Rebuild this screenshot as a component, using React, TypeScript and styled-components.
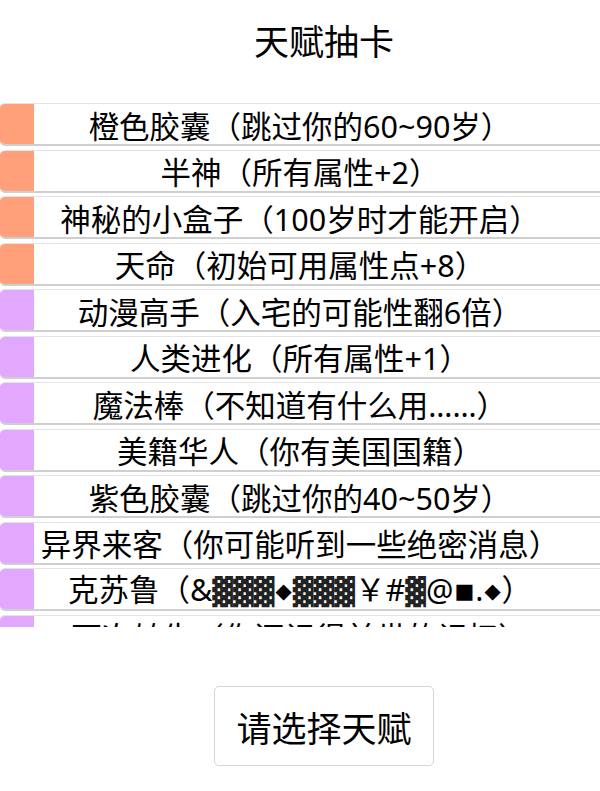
import React from "react";
import styled, { createGlobalStyle } from "styled-components";

const Global = createGlobalStyle`
  html, body { margin: 0; padding: 0; background: #fff; }
  body { font-family: "Noto Sans", "DejaVu Sans", "Noto Sans CJK SC", sans-serif; color: #000; }
  * { box-sizing: border-box; }
`;

const Page = styled.div`
  width: 600px;
  height: 791px;
  display: flex;
  flex-direction: column;
  align-items: stretch;
  overflow: hidden;
`;

const Title = styled.h1`
  margin: 22px 0 0 0;
  padding-left: 48px;
  height: 81px;
  font-size: 35px;
  line-height: 35px;
  font-weight: 400;
  text-align: center;
  font-family: "Noto Sans CJK SC", sans-serif;
`;

const List = styled.ul`
  list-style: none;
  margin: 0;
  padding: 0;
  height: 524px;
  overflow-y: auto;
  scrollbar-width: none;
  &::-webkit-scrollbar { display: none; }
`;

const Row = styled.li`
  display: grid;
  grid-template-columns: 34px 1fr 34px;
  align-items: center;
  height: 43px;
  margin-bottom: 3.5px;
  border-top: 1px solid #e4e4e4;
  border-bottom: 2px solid #cfcfcf;
  border-radius: 5px 0 0 5px;
  background: #fff;
  overflow: hidden;
`;

const Stripe = styled.span<{ $color: string }>`
  align-self: stretch;
  margin: -1px 0 -2px 0;
  background: ${(p) => p.$color};
`;

const Label = styled.span`
  font-size: 30.5px;
  line-height: 30px;
  padding-top: 3px;
  text-align: center;
  white-space: nowrap;
  margin: 0 -34px;
`;

const Sym = styled.span`
  font-size: 21px;
  vertical-align: 3px;
  margin: 0 1px;
  font-family: "DejaVu Sans", sans-serif;
`;

const Shade = styled.span`
  color: #222;
  font-size: 27px;
  font-family: "DejaVu Sans", sans-serif;
`;

const Footer = styled.div`
  flex: 1;
  display: flex;
  justify-content: center;
  align-items: flex-start;
  padding-top: 59px;
  padding-left: 48px;
`;

const Button = styled.button`
  height: 80px;
  padding: 0 21px;
  background: #fff;
  border: 1px solid #d6d6d6;
  border-radius: 5px;
  font-size: 35px;
  line-height: 35px;
  font-family: "Noto Sans CJK SC", sans-serif;
  color: #000;
  cursor: pointer;
`;

const ORANGE = "#ffa07a";
const PURPLE = "#e2a7ff";

const talents: { text: string; color: string }[] = [
  { text: "橙色胶囊（跳过你的60~90岁）", color: ORANGE },
  { text: "半神（所有属性+2）", color: ORANGE },
  { text: "神秘的小盒子（100岁时才能开启）", color: ORANGE },
  { text: "天命（初始可用属性点+8）", color: ORANGE },
  { text: "动漫高手（入宅的可能性翻6倍）", color: PURPLE },
  { text: "人类进化（所有属性+1）", color: PURPLE },
  { text: "魔法棒（不知道有什么用……）", color: PURPLE },
  { text: "美籍华人（你有美国国籍）", color: PURPLE },
  { text: "紫色胶囊（跳过你的40~50岁）", color: PURPLE },
  { text: "异界来客（你可能听到一些绝密消息）", color: PURPLE },
  { text: "克苏鲁（&▓▓▓◆▓▓▓￥#▓@■.◆）", color: PURPLE },
  { text: "下次转生（你还记得前世的记忆）", color: PURPLE },
];

function renderText(text: string) {
  const parts = text.split(/(▓+|[◆■])/);
  return parts.map((p, i) => {
    if (!p) return null;
    if (p[0] === "▓") return <Shade key={i}>{p}</Shade>;
    if (p === "◆" || p === "■") return <Sym key={i}>{p}</Sym>;
    return <React.Fragment key={i}>{p}</React.Fragment>;
  });
}

export default function App() {
  return (
    <Page>
      <Global />
      <Title>天赋抽卡</Title>
      <List>
        {talents.map((t, i) => (
          <Row key={i}>
            <Stripe $color={t.color} />
            <Label>{renderText(t.text)}</Label>
            <span />
          </Row>
        ))}
      </List>
      <Footer>
        <Button>请选择天赋</Button>
      </Footer>
    </Page>
  );
}
